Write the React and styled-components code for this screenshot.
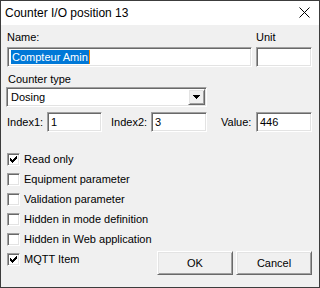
import React from 'react';
import styled, { createGlobalStyle, css } from 'styled-components';

const GlobalStyle = createGlobalStyle`
  html, body {
    margin: 0;
    padding: 0;
    background: #f0f0f0;
  }
  * {
    box-sizing: border-box;
  }
`;

const sunken = css`
  background: #ffffff;
  border: 1px solid;
  border-color: #a0a0a0 #ffffff #ffffff #a0a0a0;
  box-shadow: inset 1px 1px 0 #696969, inset -1px -1px 0 #e3e3e3;
`;

const raised = css`
  background: #f0f0f0;
  border: 1px solid;
  border-color: #ffffff #696969 #696969 #ffffff;
  box-shadow: inset 1px 1px 0 #e3e3e3, inset -1px -1px 0 #a0a0a0;
`;

const Dialog = styled.div`
  width: 320px;
  height: 288px;
  border: 1px solid #3c3c3c;
  background: #f0f0f0;
  display: flex;
  flex-direction: column;
  font-family: 'Liberation Sans', Arial, sans-serif;
  font-size: 11px;
  color: #000;
`;

const TitleBar = styled.div`
  height: 24px;
  flex: none;
  background: #ffffff;
  display: flex;
  align-items: center;
  justify-content: space-between;
  padding: 0 9px 1px 4px;
  font-size: 12px;
`;

const Body = styled.div`
  flex: 1;
  display: flex;
  flex-direction: column;
  padding: 6px 7px 0 5px;
`;

const TopRow = styled.div`
  display: grid;
  grid-template-columns: 245px 56px;
  column-gap: 4px;
  padding-left: 1px;
`;

const Field = styled.div`
  display: flex;
  flex-direction: column;
`;

const Label = styled.div`
  height: 13px;
  line-height: 13px;
  margin-bottom: ${({ gap }) => gap ?? 3}px;
  margin-top: ${({ top }) => top ?? 0}px;
  padding-left: ${({ indent }) => indent ?? 0}px;
`;

const TextBox = styled.div`
  ${sunken};
  width: ${({ w }) => (w ? `${w}px` : 'auto')};
  height: 20px;
  display: flex;
  align-items: center;
  padding: 0 3px;
  flex: none;
`;

const Selected = styled.span`
  background: #0078d7;
  color: #ffffff;
  line-height: 14px;
  padding: 0 1px;
`;

const Caret = styled.span`
  width: 1px;
  height: 14px;
  background: #ff8a00;
`;

const Combo = styled.div`
  ${sunken};
  width: 201px;
  height: 20px;
  display: flex;
  align-items: center;
  justify-content: space-between;
  padding: 0 1px 0 4px;
`;

const DropButton = styled.div`
  ${raised};
  width: 17px;
  height: 16px;
  display: flex;
  align-items: center;
  justify-content: center;
`;

const IndexRow = styled.div`
  display: flex;
  align-items: center;
  margin-top: 5px;
  padding-left: 1px;
`;

const InlineLabel = styled.div`
  width: ${({ w }) => w}px;
  margin-left: ${({ ml }) => ml ?? 0}px;
  flex: none;
`;

const Bottom = styled.div`
  display: flex;
  justify-content: space-between;
  margin-top: 17px;
  padding-left: 1px;
`;

const CheckList = styled.div`
  display: flex;
  flex-direction: column;
`;

const CheckRow = styled.label`
  height: 20px;
  display: flex;
  align-items: center;
  gap: 4px;
`;

const Box = styled.span`
  ${sunken};
  width: 13px;
  height: 13px;
  display: flex;
  align-items: center;
  justify-content: center;
  flex: none;
`;

const Buttons = styled.div`
  display: flex;
  gap: 3px;
  margin-top: 102px;
  align-self: flex-start;
`;

const Button = styled.div`
  ${raised};
  width: 76px;
  height: 24px;
  display: flex;
  align-items: center;
  justify-content: center;
`;

const checkRuns = [
  [6, 0, 1],
  [5, 1, 2],
  [0, 2, 1],
  [4, 2, 3],
  [0, 3, 2],
  [3, 3, 3],
  [0, 4, 5],
  [1, 5, 3],
  [2, 6, 1],
];

const CheckMark = () => (
  <svg width="7" height="7" viewBox="0 0 7 7" shapeRendering="crispEdges">
    {checkRuns.map(([x, y, w], i) => (
      <rect key={i} x={x} y={y} width={w} height="1" fill="#000" />
    ))}
  </svg>
);

const Checkbox = ({ checked, children }) => (
  <CheckRow>
    <Box>{checked && <CheckMark />}</Box>
    {children}
  </CheckRow>
);

const options = [
  ['Read only', true],
  ['Equipment parameter', false],
  ['Validation parameter', false],
  ['Hidden in mode definition', false],
  ['Hidden in Web application', false],
  ['MQTT Item', true],
];

export default function App() {
  return (
    <>
      <GlobalStyle />
      <Dialog>
        <TitleBar>
          <span>Counter I/O position 13</span>
          <svg width="11" height="11" viewBox="0 0 11 11">
            <path d="M0.5 0.5L10.5 10.5M10.5 0.5L0.5 10.5" stroke="#000" strokeWidth="1" />
          </svg>
        </TitleBar>
        <Body>
          <TopRow>
            <Field>
              <Label>Name:</Label>
              <TextBox>
                <Selected>Compteur Amin</Selected>
                <Caret />
              </TextBox>
            </Field>
            <Field>
              <Label>Unit</Label>
              <TextBox />
            </Field>
          </TopRow>
          <Label top={6} gap={1} indent={2}>
            Counter type
          </Label>
          <Combo>
            <span>Dosing</span>
            <DropButton>
              <svg width="7" height="4" viewBox="0 0 7 4" shapeRendering="crispEdges">
                <path d="M0 0h7v1h-1v1h-1v1h-1v1h-1v-1h-1v-1h-1v-1h-1z" fill="#000" />
              </svg>
            </DropButton>
          </Combo>
          <IndexRow>
            <InlineLabel w={40}>Index1:</InlineLabel>
            <TextBox w={55}>1</TextBox>
            <InlineLabel w={40} ml={9}>
              Index2:
            </InlineLabel>
            <TextBox w={56}>3</TextBox>
            <InlineLabel w={35} ml={14}>
              Value:
            </InlineLabel>
            <TextBox w={56}>446</TextBox>
          </IndexRow>
          <Bottom>
            <CheckList>
              {options.map(([text, checked]) => (
                <Checkbox key={text} checked={checked}>
                  {text}
                </Checkbox>
              ))}
            </CheckList>
            <Buttons>
              <Button>OK</Button>
              <Button>Cancel</Button>
            </Buttons>
          </Bottom>
        </Body>
      </Dialog>
    </>
  );
}
